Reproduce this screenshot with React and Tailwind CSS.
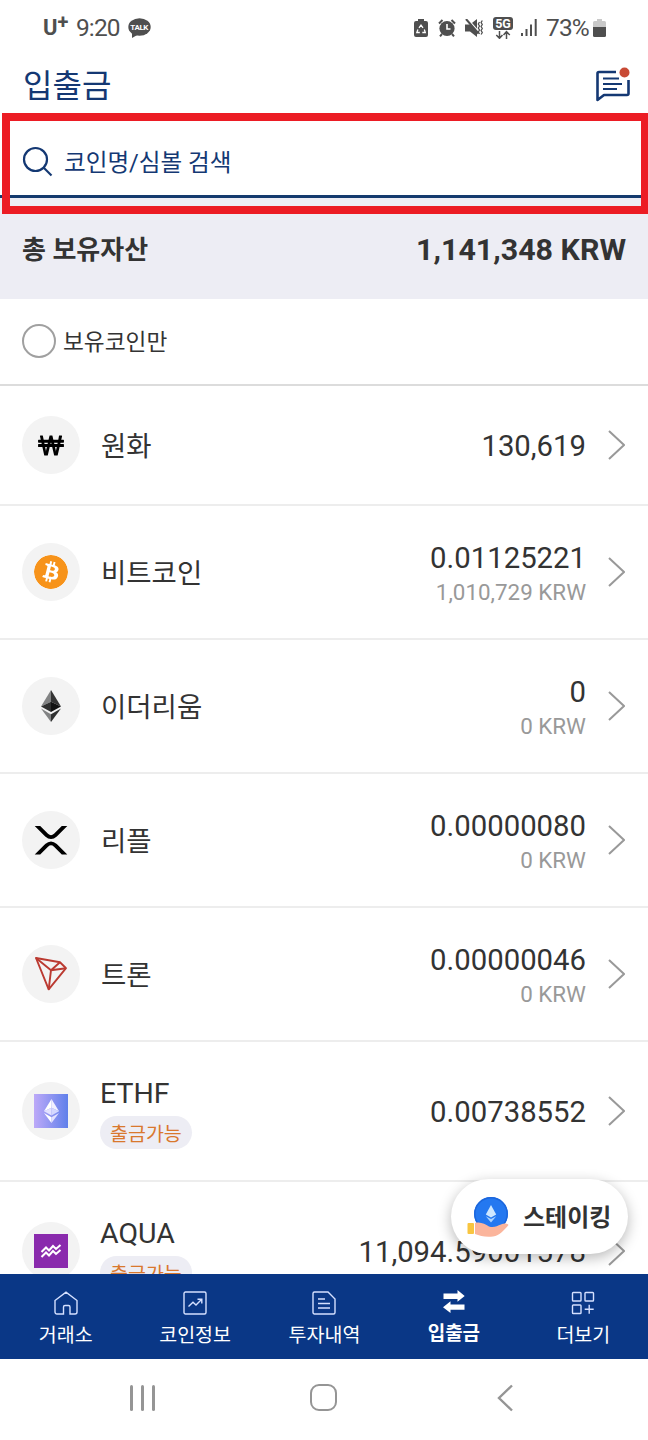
import { FaWonSign } from "react-icons/fa";
import { SiBitcoin } from "react-icons/si";

const EthMark = ({ className, colors }) => (
  <svg viewBox="0 0 20 32" className={className}>
    <path d="M10 0 0 16.4 10 11.8Z" fill={colors[0]} />
    <path d="M10 0 20 16.4 10 11.8Z" fill={colors[1]} />
    <path d="M0 16.4 10 11.8V22Z" fill={colors[2]} />
    <path d="M20 16.4 10 11.8V22Z" fill={colors[3]} />
    <path d="M0 18.6 10 24.2V32Z" fill={colors[0]} />
    <path d="M20 18.6 10 24.2V32Z" fill={colors[2]} />
  </svg>
);

const XrpMark = () => (
  <svg viewBox="0 0 58 58" className="h-[58px] w-[58px]">
    <path d="M12.7 15H18.2L26 22.8Q29 25.5 32 22.8L39.8 15H45.3L34.8 25.4Q29 30.4 23.2 25.4Z" />
    <path
      transform="translate(0 58.5) scale(1 -1)"
      d="M12.7 15H18.2L26 22.8Q29 25.5 32 22.8L39.8 15H45.3L34.8 25.4Q29 30.4 23.2 25.4Z"
    />
  </svg>
);

const TronMark = () => (
  <svg viewBox="0 0 58 58" className="h-[58px] w-[58px]" fill="none" stroke="#bb3a31" strokeWidth="1.9" strokeLinejoin="round">
    <path d="M14 13 38 17.3 44 23.2 26.7 44.3Z" />
    <path d="M14 13 29 25.2 38 17.3M29 25.2 44 23.2M29 25.2 26.7 44.3" />
  </svg>
);

const AquaMark = () => (
  <svg viewBox="0 0 34 34" className="h-[34px] w-[34px] bg-[#8a2aad]" fill="none" stroke="#fff" strokeWidth="2">
    <path d="M7.5 18 12 13.5 15 16.5 19 12 22 15 26.5 11" />
    <path d="M7.5 23 12 18.5 15 21.5 19 17 22 20 26.5 16" />
  </svg>
);

const coins = [
  {
    name: "원화",
    amount: "130,619",
    icon: <FaWonSign className="h-[23px] w-[26px] text-black" />,
    height: "h-[120px]",
  },
  {
    name: "비트코인",
    amount: "0.01125221",
    krw: "1,010,729 KRW",
    icon: <SiBitcoin className="h-[34px] w-[34px] rounded-full bg-white text-[#f7931a]" />,
    height: "h-[134px]",
  },
  {
    name: "이더리움",
    amount: "0",
    krw: "0 KRW",
    icon: <EthMark className="h-8 w-5" colors={["#828384", "#343434", "#2f3030", "#131313"]} />,
    height: "h-[134px]",
  },
  { name: "리플", amount: "0.00000080", krw: "0 KRW", icon: <XrpMark />, height: "h-[134px]" },
  { name: "트론", amount: "0.00000046", krw: "0 KRW", icon: <TronMark />, height: "h-[134px]" },
  {
    name: "ETHF",
    amount: "0.00738552",
    badge: "출금가능",
    icon: (
      <div className="flex h-[34px] w-[34px] items-center justify-center bg-linear-to-r from-[#bda9f8] to-[#5f7fea]">
        <EthMark className="h-6 w-[15px]" colors={["#ffffff", "#f1f0ff", "#e3e2ff", "#d5d8ff"]} />
      </div>
    ),
    height: "h-[140px]",
  },
  { name: "AQUA", amount: "11,094.59001578", badge: "출금가능", icon: <AquaMark />, height: "h-[140px]" },
];

const tabs = [
  {
    label: "거래소",
    icon: <path d="M1 9.5 12 1.2 23 9.5V21a2 2 0 0 1-2 2H16V16a1.5 1.5 0 0 0-1.5-1.5H11A1.5 1.5 0 0 0 9.5 16V23H3a2 2 0 0 1-2-2Z" />,
  },
  {
    label: "코인정보",
    icon: (
      <>
        <rect x="1" y="1" width="22" height="22" rx="1.5" />
        <path d="M5.5 15.5 10 11.2 13 14 18.5 8.5M14.5 8.2H18.8V12.5" />
      </>
    ),
  },
  {
    label: "투자내역",
    icon: (
      <>
        <path d="M2.5 1H16L23 8V21.5a1.5 1.5 0 0 1-1.5 1.5H2.5A1.5 1.5 0 0 1 1 21.5V2.5A1.5 1.5 0 0 1 2.5 1Z" />
        <path d="M6 8H13M6 12.5H18M6 17H18" />
      </>
    ),
  },
  {
    label: "입출금",
    active: true,
    icon: (
      <path
        stroke="none"
        fill="#fff"
        d="M1.5 2.5H15.5V-1L22.7 5 15.5 10.8V8H1.5ZM22.5 18.8H8.5V22L1 16.2 8.5 10.3V13.5H22.5Z"
      />
    ),
  },
  {
    label: "더보기",
    icon: (
      <>
        <rect x="1.5" y="1.5" width="8.5" height="8.5" rx=".8" />
        <rect x="14" y="1.5" width="8.5" height="8.5" rx=".8" />
        <rect x="1.5" y="14" width="8.5" height="8.5" rx=".8" />
        <path d="M18.2 13.8V22.8M13.7 18.3H22.7" />
      </>
    ),
  },
];

const StatusBar = () => (
  <div className="flex h-[54px] shrink-0 items-center justify-between pr-[42px] pl-[43px] text-[#4f4f4f]">
    <div className="flex items-center pt-px">
      <span className="w-[33px] text-[22px] leading-7 font-bold">
        U<span className="relative -top-1.5 text-[20px]">+</span>
      </span>
      <span className="w-[52px] text-[24.5px] leading-7 tracking-[-0.9px]">9:20</span>
      <svg viewBox="0 0 23 20" className="h-5 w-[23px]">
        <ellipse cx="11.5" cy="9" rx="11.2" ry="8.8" fill="currentColor" />
        <path d="M4 14V20L11 16Z" fill="currentColor" />
        <text x="11.2" y="11.8" textAnchor="middle" fontSize="8" fontWeight="700" letterSpacing="-.4" fill="#fff">
          TALK
        </text>
      </svg>
    </div>
    <div className="flex items-center pt-px">
      <svg viewBox="0 0 14 18" className="mr-[10px] h-[18px] w-[14px]">
        <path fill="currentColor" d="M4 0H10V2H12a2 2 0 0 1 2 2V16a2 2 0 0 1-2 2H2a2 2 0 0 1-2-2V4A2 2 0 0 1 2 2H4Z" />
        <path d="M5 8.8 7 6 9 8.8M10.3 10.5 11.3 13.5H8.3M5.8 13.5H2.8L3.9 10.5" fill="none" stroke="#fff" strokeWidth="1.3" />
      </svg>
      <svg viewBox="0 0 18 18" className="mr-[9px] h-[18px] w-[18px]">
        <circle cx="9" cy="9.5" r="7.6" fill="currentColor" />
        <path d="M1 4.5 4.5 1M13.5 1 17 4.5M4 15 2 17.3M14 15 16 17.3" stroke="currentColor" strokeWidth="2" />
        <path d="M9 5V10H12.5" fill="none" stroke="#fff" strokeWidth="1.6" />
      </svg>
      <svg viewBox="0 0 18 18" className="mr-[10px] h-[18px] w-[18px]">
        <path d="M0 5.5H5L12 0V18L5 12.5H0Z" fill="currentColor" />
        <path d="M2.5 0 14 13" stroke="#fff" strokeWidth="1.6" />
        <path d="M1 0 13.5 14.5" stroke="currentColor" strokeWidth="2" />
        <path d="M14.5 3 13.3 5 14.5 7 13.3 9 14.5 11 13.3 13 14.5 15M17.3 1.5 16.1 3.5 17.3 5.5 16.1 7.5 17.3 9.5 16.1 11.5 17.3 13.5 16.1 15.5" fill="none" stroke="currentColor" strokeWidth="1.3" />
      </svg>
      <svg viewBox="0 0 20 22" className="mr-2 h-[22px] w-5">
        <rect width="20" height="13" rx="3" fill="currentColor" />
        <text x="10" y="10.8" textAnchor="middle" fontSize="12.5" fontWeight="700" fill="#fff">
          5G
        </text>
        <path d="M6.5 14V21M3.3 18 6.5 21.3 9.5 18M13.5 22V15M10.5 18 13.5 14.7 16.8 18" fill="none" stroke="currentColor" strokeWidth="1.5" />
      </svg>
      <svg viewBox="0 0 16 17" className="mr-[9px] h-[17px] w-4" fill="currentColor">
        <rect y="14" width="2" height="3" />
        <rect x="4.5" y="10" width="2" height="7" />
        <rect x="9" y="5.5" width="2" height="11.5" />
        <rect x="13.7" width="2" height="17" />
      </svg>
      <span className="mr-1 text-[24.5px] leading-7 tracking-[-0.8px]">73%</span>
      <svg viewBox="0 0 13 18" className="h-[18px] w-[13px]">
        <path fill="#c9c9c9" d="M4 0H9V2H11.5A1.5 1.5 0 0 1 13 3.5V9H0V3.5A1.5 1.5 0 0 1 1.5 2H4Z" />
        <path fill="currentColor" d="M0 8H13V16.5A1.5 1.5 0 0 1 11.5 18H1.5A1.5 1.5 0 0 1 0 16.5Z" />
      </svg>
    </div>
  </div>
);

const CoinRow = ({ coin }) => (
  <li className={`flex shrink-0 items-center border-b-2 border-[#ededed] pr-[23px] pl-[22px] ${coin.height}`}>
    <div className="flex h-[58px] w-[58px] items-center justify-center rounded-full bg-[#f3f3f3]">{coin.icon}</div>
    {coin.badge ? (
      <div className="ml-5 flex flex-col items-start pt-0.5">
        <span className="text-[28.5px] leading-9">{coin.name}</span>
        <span className="mt-1 h-[33px] rounded-full bg-[#ededf4] px-[10px] pt-0.5 text-[19.5px] leading-[33px] text-[#d9782d]">
          {coin.badge}
        </span>
      </div>
    ) : (
      <span className="ml-[21px] pt-1 text-[27.5px] leading-9">{coin.name}</span>
    )}
    <div className={`ml-auto flex flex-col items-end ${coin.krw ? "pt-[5px]" : "pt-0.5"}`}>
      <span className="text-[29.3px] leading-9">{coin.amount}</span>
      {coin.krw && <span className="text-[22.4px] leading-[33px] text-[#999]">{coin.krw}</span>}
    </div>
    <svg viewBox="0 0 17 30" className="ml-[22px] h-[30px] w-[17px]" fill="none" stroke="#999" strokeWidth="2">
      <path d="M1 1 16 15 1 29" />
    </svg>
  </li>
);

const StakingButton = () => (
  <button className="absolute right-[20px] bottom-5 flex h-[75px] w-[177px] items-center rounded-full bg-white pl-4 shadow-[0_4px_14px_rgba(0,0,0,0.28)]">
    <svg viewBox="0 0 42 42" className="h-[42px] w-[42px]">
      <circle cx="24" cy="18" r="17" fill="#2478f0" />
      <circle cx="24" cy="18" r="16.2" fill="none" stroke="#1c66dc" strokeWidth="1.4" />
      <path d="M24 9 18.8 18.5 24 21.5 29.2 18.5Z" fill="#cfe8ff" />
      <path d="M18.8 20.2 24 26.5 29.2 20.2 24 23Z" fill="#a9d3ff" />
      <path d="M8 27C14 25.5 18 28.5 22 30.5 27 32 30 30 34 28.5 38 26.5 41 27.5 41.5 29 37 34 33 39.5 26 40.5 19 41.5 13 40 8 38Z" fill="#fbb59c" />
      <rect x="0.5" y="27" width="6.5" height="11" rx="1" fill="#f8c540" />
    </svg>
    <span className="ml-[14px] pt-[3px] text-[24px] leading-8 font-bold whitespace-nowrap">스테이킹</span>
  </button>
);

const App = () => {
  return (
    <div className="relative flex h-[1440px] w-[648px] flex-col overflow-hidden bg-white font-['Roboto','Noto_Sans_CJK_KR',sans-serif] text-[#333]">
      <StatusBar />

      <header className="flex h-[59px] shrink-0 items-center justify-between pr-[18px] pl-[23px] text-[#143873]">
        <h1 className="pt-[5px] text-[32px] leading-10">입출금</h1>
        <svg viewBox="0 0 35 36" className="h-9 w-[35px]" fill="none" stroke="currentColor" strokeWidth="2.6">
          <path d="M21 6H4a1.5 1.5 0 0 0-1.5 1.5V34L9 29H32a1.5 1.5 0 0 0 1.5-1.5V14" strokeLinejoin="round" />
          <path d="M8 12.5H24M8 18H27M8 23H22" strokeWidth="2.2" />
          <circle cx="29.5" cy="6.5" r="5" fill="#c84a35" stroke="none" />
        </svg>
      </header>

      <div className="flex h-[85px] shrink-0 items-center border-b-[3px] border-[#143a6e] pl-[22px] text-[#143873]">
        <svg viewBox="0 0 32 32" className="mt-[15px] h-8 w-8" fill="none" stroke="currentColor" strokeWidth="2.2">
          <circle cx="13.5" cy="13.5" r="11.5" />
          <path d="M21.5 21.5 29.5 29.5" />
        </svg>
        <span className="mt-[17px] ml-[10px] text-[23.6px] leading-8">코인명/심볼 검색</span>
      </div>

      <div className="flex h-[101px] shrink-0 items-center justify-between bg-[#ededf4] px-[22px] pt-[3px] font-bold">
        <span className="text-[26px] leading-9">총 보유자산</span>
        <span className="text-[30.4px] leading-9">1,141,348 KRW</span>
      </div>

      <div className="flex h-[87px] shrink-0 items-center border-b-2 border-[#dcdcdc] pl-[22px]">
        <div className="-mt-px h-[34px] w-[34px] rounded-full border-2 border-[#a0a0a0]" />
        <span className="ml-[7px] pt-0.5 text-[22.7px] leading-8">보유코인만</span>
      </div>

      <main className="relative min-h-0 flex-1">
        <ul className="flex h-full flex-col overflow-hidden">
          {coins.map((coin) => (
            <CoinRow key={coin.name} coin={coin} />
          ))}
        </ul>
        <StakingButton />
      </main>

      <nav className="grid h-[85px] shrink-0 grid-cols-5 bg-[#0a3786] pl-px text-white">
        {tabs.map((tab) => (
          <div key={tab.label} className="flex flex-col items-center pt-[17px]">
            <svg viewBox="0 0 24 24" className="h-6 w-6 overflow-visible" fill="none" stroke="#d5e0ff" strokeWidth="1.4">
              {tab.icon}
            </svg>
            <span className={tab.active ? "mt-[5px] text-[19px] leading-7 font-bold" : "mt-[7px] text-[19.5px] leading-7"}>
              {tab.label}
            </span>
          </div>
        ))}
      </nav>

      <div className="flex h-[81px] shrink-0 items-center pb-1 pl-[130px]">
        <div className="flex h-[26px] w-[25px] justify-between">
          <div className="w-[3px] rounded-full bg-[#959595]" />
          <div className="w-[3px] rounded-full bg-[#959595]" />
          <div className="w-[3px] rounded-full bg-[#959595]" />
        </div>
        <div className="ml-[155px] h-[27px] w-[27px] rounded-[9px] border-[2.5px] border-[#959595]" />
        <svg viewBox="0 0 16 28" className="ml-[160px] h-7 w-4" fill="none" stroke="#959595" strokeWidth="2.4">
          <path d="M15 1.5 2 14 15 26.5" />
        </svg>
      </div>

      {/* highlight frame around the search field */}
      <div className="pointer-events-none absolute top-[113px] right-0 left-[2px] h-[101px] border-8 border-r-[7px] border-[#ec1c24]" />
    </div>
  );
};

export default App;
